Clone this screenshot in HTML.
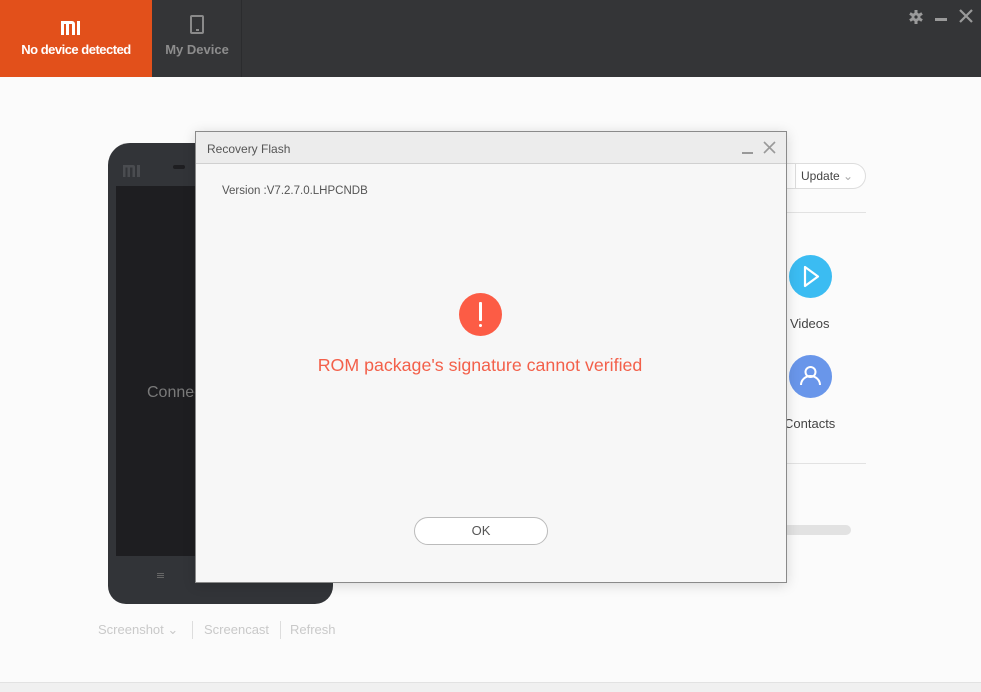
<!DOCTYPE html>
<html><head><meta charset="utf-8"><style>
*{margin:0;padding:0;box-sizing:border-box}
body{width:981px;height:692px;background:#fbfbfb;position:relative;overflow:hidden;font-family:"Liberation Sans",sans-serif}
.abs{position:absolute}
</style></head><body>
<div class="abs" style="left:0;top:0;width:981px;height:77px;background:#343537"></div>
<div class="abs" style="left:0;top:0;width:152px;height:77px;background:#e2501b"></div>
<div class="abs" style="left:61px;top:21px;width:19px;height:14px">
<svg width="19" height="14"><path d="M0 0h11a3 3 0 0 1 3 3v11h-3v-11h-3v11h-3v-11h-2v11h-3z M16 0h3v14h-3z" fill="#fff"/></svg></div>
<div class="abs" style="left:0;top:42px;width:152px;text-align:center;color:#fff;font-weight:bold;font-size:13px;letter-spacing:-0.5px">No device detected</div>
<div class="abs" style="left:241px;top:0;width:1px;height:77px;background:#2b2c2e"></div>
<div class="abs" style="left:190px;top:15px;width:14px;height:19px;border:2px solid #8a8a8a;border-radius:2px"></div>
<div class="abs" style="left:196px;top:29px;width:3px;height:2px;background:#8a8a8a"></div>
<div class="abs" style="left:152px;top:42px;width:90px;text-align:center;color:#8d8d8d;font-weight:bold;font-size:13px">My Device</div>
<svg class="abs" style="left:908px;top:9px" width="16" height="16" viewBox="0 0 16 16"><g fill="#9a9a9a"><circle cx="8" cy="8" r="4.5"/><rect x="6.5" y="1" width="3" height="14"/><rect x="6.5" y="1" width="3" height="14" transform="rotate(60 8 8)"/><rect x="6.5" y="1" width="3" height="14" transform="rotate(-60 8 8)"/></g><circle cx="8" cy="8" r="1.6" fill="#343537"/></svg>
<div class="abs" style="left:935px;top:18px;width:12px;height:3px;background:#9a9a9a"></div>
<svg class="abs" style="left:959px;top:9px" width="14" height="14"><path d="M1 1L13 13M13 1L1 13" stroke="#9a9a9a" stroke-width="2.2"/></svg>

<div class="abs" style="left:108px;top:143px;width:225px;height:461px;background:#323438;border-radius:22px 22px 18px 18px"></div>
<div class="abs" style="left:116px;top:186px;width:210px;height:370px;background:#1e1e21"></div>
<div class="abs" style="left:123px;top:164px;width:17px;height:12px"><svg width="17" height="12"><path d="M0 0h10a2 2 0 0 1 2 2v10h-2.5v-9.5h-2.5v9.5h-2.5v-9.5h-2v9.5h-2.5z M14 0h3v12h-3z" fill="#4a4c50"/></svg></div>
<div class="abs" style="left:173px;top:165px;width:12px;height:4px;border-radius:2px;background:#1e1e21"></div>
<div class="abs" style="left:147px;top:384px;color:#7a7a7a;font-size:16px">Connect</div>
<div class="abs" style="left:157px;top:573px;width:7px;height:5px;border-top:1px solid #666;border-bottom:1px solid #666"></div>
<div class="abs" style="left:157px;top:575px;width:7px;height:1px;background:#666"></div>
<div class="abs" style="left:98px;top:622px;color:#c9c9c9;font-size:13px">Screenshot ⌄</div>
<div class="abs" style="left:192px;top:621px;width:1px;height:18px;background:#ddd"></div>
<div class="abs" style="left:204px;top:622px;color:#c9c9c9;font-size:13px">Screencast</div>
<div class="abs" style="left:280px;top:621px;width:1px;height:18px;background:#ddd"></div>
<div class="abs" style="left:290px;top:622px;color:#c9c9c9;font-size:13px">Refresh</div>

<div class="abs" style="left:760px;top:163px;width:106px;height:26px;border:1px solid #ddd;border-left:none;border-radius:0 13px 13px 0;background:#fff"></div>
<div class="abs" style="left:795px;top:163px;width:1px;height:26px;background:#ddd"></div>
<div class="abs" style="left:801px;top:169px;color:#444;font-size:12px">Update <span style="color:#aaa">⌄</span></div>
<div class="abs" style="left:760px;top:212px;width:106px;height:1px;background:#e2e2e2"></div>
<div class="abs" style="left:789px;top:255px;width:43px;height:43px;border-radius:50%;background:#3bbcf2"></div>
<svg class="abs" style="left:789px;top:255px" width="43" height="43"><path d="M16 12L29 21.5L16 31Z" fill="none" stroke="#fff" stroke-width="2.2" stroke-linejoin="round"/></svg>
<div class="abs" style="left:790px;top:316px;color:#444;font-size:13px">Videos</div>
<div class="abs" style="left:789px;top:355px;width:43px;height:43px;border-radius:50%;background:#6996ea"></div>
<svg class="abs" style="left:789px;top:355px" width="43" height="43"><circle cx="21.5" cy="17" r="5" fill="none" stroke="#fff" stroke-width="2"/><path d="M12 30a9.5 9 0 0 1 19 0" fill="none" stroke="#fff" stroke-width="2"/></svg>
<div class="abs" style="left:784px;top:416px;color:#444;font-size:13px">Contacts</div>
<div class="abs" style="left:760px;top:463px;width:106px;height:1px;background:#e2e2e2"></div>
<div class="abs" style="left:760px;top:525px;width:91px;height:10px;border-radius:5px;background:#e2e2e2"></div>

<div class="abs" style="left:0;top:682px;width:981px;height:10px;background:#f0f0f0;border-top:1px solid #e2e2e2"></div>

<div class="abs" style="left:195px;top:131px;width:592px;height:452px;background:#f7f7f7;border:1px solid #8a8a8a;box-shadow:0 2px 12px rgba(0,0,0,0.15)"></div>
<div class="abs" style="left:196px;top:132px;width:590px;height:32px;background:#ececec;border-bottom:1px solid #d0d0d0"></div>
<div class="abs" style="left:207px;top:142px;color:#555;font-size:12px">Recovery Flash</div>
<div class="abs" style="left:742px;top:152px;width:11px;height:1.5px;background:#999"></div>
<svg class="abs" style="left:763px;top:141px" width="13" height="13"><path d="M1 1L12 12M12 1L1 12" stroke="#999" stroke-width="1.6"/></svg>
<div class="abs" style="left:222px;top:185px;color:#555;font-size:11.5px">Version :V7.2.7.0.LHPCNDB</div>
<div class="abs" style="left:459px;top:293px;width:43px;height:43px;border-radius:50%;background:#fc5c45"></div>
<div class="abs" style="left:479px;top:302px;width:3px;height:19px;background:#fff;border-radius:1px"></div>
<div class="abs" style="left:479px;top:324px;width:3px;height:3px;background:#fff;border-radius:50%"></div>
<div class="abs" style="left:180px;top:355px;width:600px;text-align:center;color:#f3604a;font-size:17.8px">ROM package's signature cannot verified</div>
<div class="abs" style="left:414px;top:517px;width:134px;height:28px;border:1px solid #bbb;border-radius:14px;background:#fff;text-align:center;line-height:26px;color:#555;font-size:13px">OK</div>
</body></html>
